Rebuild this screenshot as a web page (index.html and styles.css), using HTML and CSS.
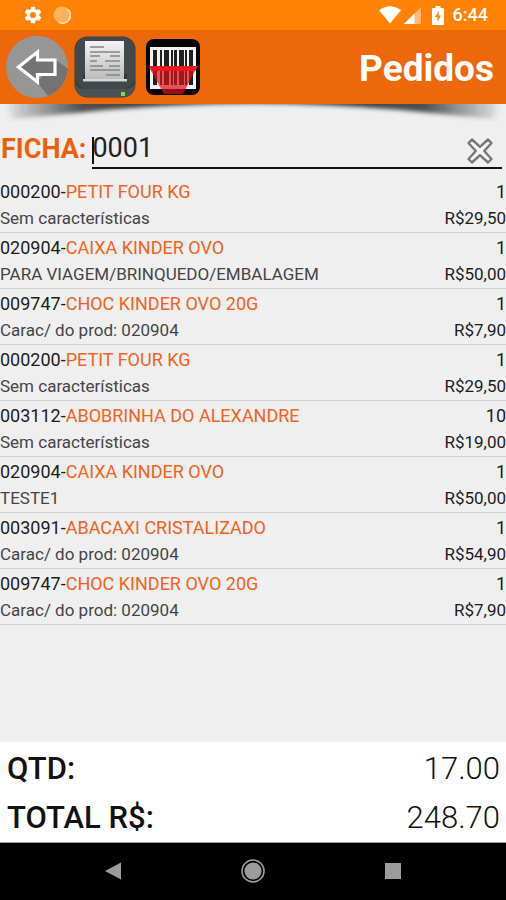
FILE: index.html
```html
<!DOCTYPE html>
<html lang="pt-BR">
<head>
<meta charset="utf-8">
<meta name="viewport" content="width=device-width, initial-scale=1">
<title>Pedidos</title>
<link rel="stylesheet" href="styles.css">
</head>
<body>
<div class="status-bar">
  <div class="status-group">
    <svg width="20" height="20" viewBox="0 0 24 24" fill="#fff"><path d="M19.4 13a7.500 7.500 0 0 0 0-2l2.200-1.700c.2-.1.200-.4.100-.6l-2-3.500c-.1-.2-.4-.3-.6-.2l-2.500 1a7.700 7.700 0 0 0-1.700-1l-.4-2.600c0-.2-.2-.4-.5-.4h-4c-.3 0-.5.200-.5.400L9.100 5a7.700 7.700 0 0 0-1.700 1l-2.500-1c-.2-.1-.5 0-.6.200l-2 3.500c-.1.200-.1.500.100.600L4.600 11a7.500 7.500 0 0 0 0 2l-2.200 1.700c-.2.100-.2.400-.1.600l2 3.500c.1.200.4.300.6.200l2.500-1a7.700 7.700 0 0 0 1.700 1l.4 2.600c0 .2.200.4.500.4h4c.3 0 .5-.2.500-.4l.4-2.600a7.700 7.700 0 0 0 1.700-1l2.500 1c.2.100.5 0 .6-.2l2-3.500c.1-.2.100-.5-.1-.6zM12 15.600a3.600 3.600 0 1 1 0-7.200 3.600 3.600 0 0 1 0 7.200z"/></svg>
    <svg width="18" height="18" viewBox="0 0 18 18"><circle cx="9" cy="9" r="8.500" fill="#ffb25c"/><path d="M14.800 3.200A8 8 0 0 1 6 16.400" fill="none" stroke="#ffe3c2" stroke-width="1.500"/></svg>
  </div>
  <div class="status-group status-right">
    <svg width="22" height="18" viewBox="0 0 22 18"><path d="M11 17.500L0 4.200Q11-3.500 22 4.200z" fill="#fff"/></svg>
    <svg class="signal" width="17" height="17" viewBox="0 0 17 17"><path d="M0 17L17 0v17z" fill="#ffb873"/><path d="M0 17L10.500 6.500V17z" fill="#fff"/></svg>
    <svg class="battery" width="12" height="19" viewBox="0 0 12 19"><path d="M3.500 0h5v2H11q1 0 1 1v15q0 1-1 1H1q-1 0-1-1V3q0-1 1-1h2.500z" fill="#fff"/><path d="M7 4.500L3 11h2.500v5L9 9.500H6.500z" fill="#ff8205"/></svg>
    <span class="clock">6:44</span>
  </div>
</div>

<header class="app-bar">
  <button class="icon-button" type="button" aria-label="Voltar">
    <svg width="62" height="62" viewBox="0 0 62 62"><circle cx="31" cy="31" r="31" fill="#969696"/><path d="M49 23L62 33Q59 53 42 60L31 46 40 36z" fill="#737373"/><path d="M12.500 31L31.500 16v8H49v14.500H31.500V46z" fill="#747474" stroke="#fff" stroke-width="3.200"/></svg>
  </button>
  <button class="icon-button" type="button" aria-label="Imprimir">
    <svg width="62" height="62" viewBox="0 0 62 62">
      <defs><linearGradient id="sheet" x1="0" y1="0" x2="0" y2="1"><stop offset="0" stop-color="#f4f4f4"/><stop offset="1" stop-color="#bcbcbc"/></linearGradient></defs>
      <rect x=".5" y=".5" width="61" height="61" rx="13" fill="#343b3f"/><path d="M1 44v4q0 13 13 13h34q13 0 13-13v-4q0 9-11 9H12Q1 53 1 44z" fill="#4b5256"/><rect x="1" y="1" width="60" height="52" rx="13" fill="#42494d"/>
      <path d="M9 38h44v6q0 2-2 2H11q-2 0-2-2z" fill="#30363a"/><rect x="11" y="5" width="39" height="38" fill="url(#sheet)"/>
      <path d="M9 43h44v2.500H9z" fill="#d5d9da"/>
      <g stroke="#858585" stroke-width="1.500"><path d="M16 11h14M16 16h30M16 20h10M36 20h10M16 25h7M31 25h15M16 30h13M35 30h11M16 34h30M32 39h14"/></g>
      <rect x="47" y="56" width="4" height="4" fill="#7be03d"/>
    </svg>
  </button>
  <button class="icon-button" type="button" aria-label="Ler código de barras">
    <svg width="56" height="58" viewBox="0 0 56 58">
      <rect x="1" y="1" width="54" height="56" rx="8" fill="#060606"/>
      <rect x="5" y="9" width="46" height="42" fill="#f2f2f2"/>
      <path d="M8 12h4v35H8zM15 12h2v35h-2zM19 12h5v35h-5zM26 12h2v35h-2zM29 12h3v35h-3zM34 12h5v35h-5zM40 12h2v35h-2zM44 12h4v35h-4z" fill="#202020"/>
      <path d="M5 31h46L38 56H19z" fill="#d9121b" opacity=".7"/><path d="M4 28h49l-3 5H7z" fill="#f01320"/>
    </svg>
  </button>
  <h1 class="title">Pedidos</h1>
</header>

<svg class="bar-shadow" viewBox="0 0 506 20" preserveAspectRatio="none" aria-hidden="true">
  <defs>
    <linearGradient id="shade" x1="0" y1="0" x2="1" y2="0"><stop offset="0" stop-color="#444" stop-opacity=".1"/><stop offset=".15" stop-color="#333" stop-opacity=".85"/><stop offset=".5" stop-color="#222"/><stop offset=".85" stop-color="#333" stop-opacity=".85"/><stop offset="1" stop-color="#444" stop-opacity=".1"/></linearGradient>
    <filter id="soft"><feGaussianBlur stdDeviation="3 2"/></filter>
  </defs>
  <path d="M8-6H498L494 15Q450 11 400 6Q330 0 253-1Q176 0 106 6Q56 11 12 15z" fill="url(#shade)" filter="url(#soft)"/>
</svg>

<main class="content">
  <form class="search">
    <label class="search-label" for="ficha">FICHA:</label>
    <div class="field">
      <input id="ficha" type="text" value="0001">
      <span class="caret"></span>
      <button class="clear" type="button" aria-label="Limpar">
        <svg width="28" height="28" viewBox="0 0 28 28"><path d="M6 2.500L14 9.800 22 2.500 25.500 6 18.200 14 25.500 22 22 25.500 14 18.200 6 25.500 2.500 22 9.800 14 2.500 6z" fill="#f4f4f4" stroke="#777" stroke-width="2.400" stroke-linejoin="round"/></svg>
      </button>
    </div>
  </form>

  <ul class="orders">
    <li><p class="product">000200-<span>PETIT FOUR KG</span></p><p class="qty">1</p><p class="note">Sem características</p><p class="price">R$29,50</p></li>
    <li><p class="product">020904-<span>CAIXA KINDER OVO</span></p><p class="qty">1</p><p class="note">PARA VIAGEM/BRINQUEDO/EMBALAGEM</p><p class="price">R$50,00</p></li>
    <li><p class="product">009747-<span>CHOC KINDER OVO 20G</span></p><p class="qty">1</p><p class="note">Carac/ do prod: 020904</p><p class="price">R$7,90</p></li>
    <li><p class="product">000200-<span>PETIT FOUR KG</span></p><p class="qty">1</p><p class="note">Sem características</p><p class="price">R$29,50</p></li>
    <li><p class="product">003112-<span>ABOBRINHA DO ALEXANDRE</span></p><p class="qty">10</p><p class="note">Sem características</p><p class="price">R$19,00</p></li>
    <li><p class="product">020904-<span>CAIXA KINDER OVO</span></p><p class="qty">1</p><p class="note">TESTE1</p><p class="price">R$50,00</p></li>
    <li><p class="product">003091-<span>ABACAXI CRISTALIZADO</span></p><p class="qty">1</p><p class="note">Carac/ do prod: 020904</p><p class="price">R$54,90</p></li>
    <li><p class="product">009747-<span>CHOC KINDER OVO 20G</span></p><p class="qty">1</p><p class="note">Carac/ do prod: 020904</p><p class="price">R$7,90</p></li>
  </ul>
</main>

<dl class="totals">
  <div><dt>QTD:</dt><dd>17.00</dd></div>
  <div><dt>TOTAL R$:</dt><dd>248.70</dd></div>
</dl>

<nav class="nav-bar">
  <button type="button" aria-label="Voltar"><svg width="24" height="24" viewBox="0 0 24 24"><path d="M4 12L20 3.500v17z" fill="#9c9c9c"/></svg></button>
  <button type="button" aria-label="Início"><svg width="24" height="24" viewBox="0 0 24 24"><circle cx="12" cy="12" r="11" fill="none" stroke="#9c9c9c" stroke-width="1.600"/><circle cx="12" cy="12" r="8.600" fill="#9c9c9c"/></svg></button>
  <button type="button" aria-label="Recentes"><svg width="24" height="24" viewBox="0 0 24 24"><rect x="4" y="4" width="16" height="16" fill="#9c9c9c"/></svg></button>
</nav>
</body>
</html>
```
FILE: styles.css
```css
* {
  box-sizing: border-box;
  margin: 0;
  padding: 0;
}

body {
  display: flex;
  flex-direction: column;
  min-height: 100vh;
  background: #efefef;
  color: #1c1c1c;
  font-family: Roboto, "Liberation Sans", sans-serif;
  font-size: 18px;
}

svg {
  display: block;
}

button {
  border: 0;
  background: none;
  cursor: pointer;
}

.status-bar {
  display: flex;
  justify-content: space-between;
  align-items: center;
  height: 30px;
  padding: 0 18px 0 23px;
  background: #ff8205;
}

.status-group {
  display: flex;
  align-items: center;
  gap: 10px;
}

.status-right {
  gap: 3px;
}

.battery {
  margin: 0 6px 0 8px;
}

.clock {
  color: #fff;
  font-size: 18px;
  font-weight: 500;
  line-height: 30px;
}

.app-bar {
  display: flex;
  align-items: center;
  gap: 6px;
  height: 74px;
  padding: 0 12px 0 6px;
  background: #ed680a;
}

.icon-button:last-of-type {
  margin-left: 3px;
}

.title {
  margin-left: auto;
  padding-top: 3px;
  color: #fff;
  font-size: 37px;
  font-weight: 700;
  line-height: 71px;
}

.bar-shadow {
  width: 100%;
  height: 20px;
}

.content {
  flex: 1;
}

.search {
  display: flex;
  align-items: flex-end;
  padding: 0 4px 8px 1px;
}

.search-label {
  color: #ed5f0c;
  font-size: 27px;
  font-weight: 700;
  line-height: 40px;
}

.field {
  position: relative;
  display: flex;
  flex: 1;
  align-items: center;
  margin-left: 6px;
  border-bottom: 2px solid #111;
}

.field input {
  flex: 1;
  min-width: 0;
  height: 43px;
  padding-top: 4px;
  border: 0;
  outline: 0;
  background: none;
  color: #222;
  font: inherit;
  font-size: 27px;
}

.caret {
  position: absolute;
  top: 13px;
  left: 0;
  width: 2px;
  height: 27px;
  background: #111;
}

.clear {
  margin: 11px 8px 0 0;
}

.orders {
  list-style: none;
}

.orders li {
  display: grid;
  grid-template-columns: 1fr auto;
  padding-top: 1px;
  border-bottom: 1px solid #d0d0d0;
  line-height: 27px;
}

.product span {
  color: #f0641e;
}

.note,
.price {
  font-size: 17px;
}

.note {
  color: #444;
}

.qty,
.price {
  text-align: right;
}

.totals {
  padding: 2px 6px 0 7px;
  border-bottom: 1px solid #999;
  background: #fff;
  color: #111;
  font-size: 31px;
  line-height: 49px;
}

.totals div {
  display: flex;
  justify-content: space-between;
}

.totals dt {
  font-weight: 500;
}

.totals dd {
  font-weight: 300;
}

.nav-bar {
  display: flex;
  justify-content: center;
  gap: 116px;
  padding: 16px 0 17px;
  background: #000;
}
```
